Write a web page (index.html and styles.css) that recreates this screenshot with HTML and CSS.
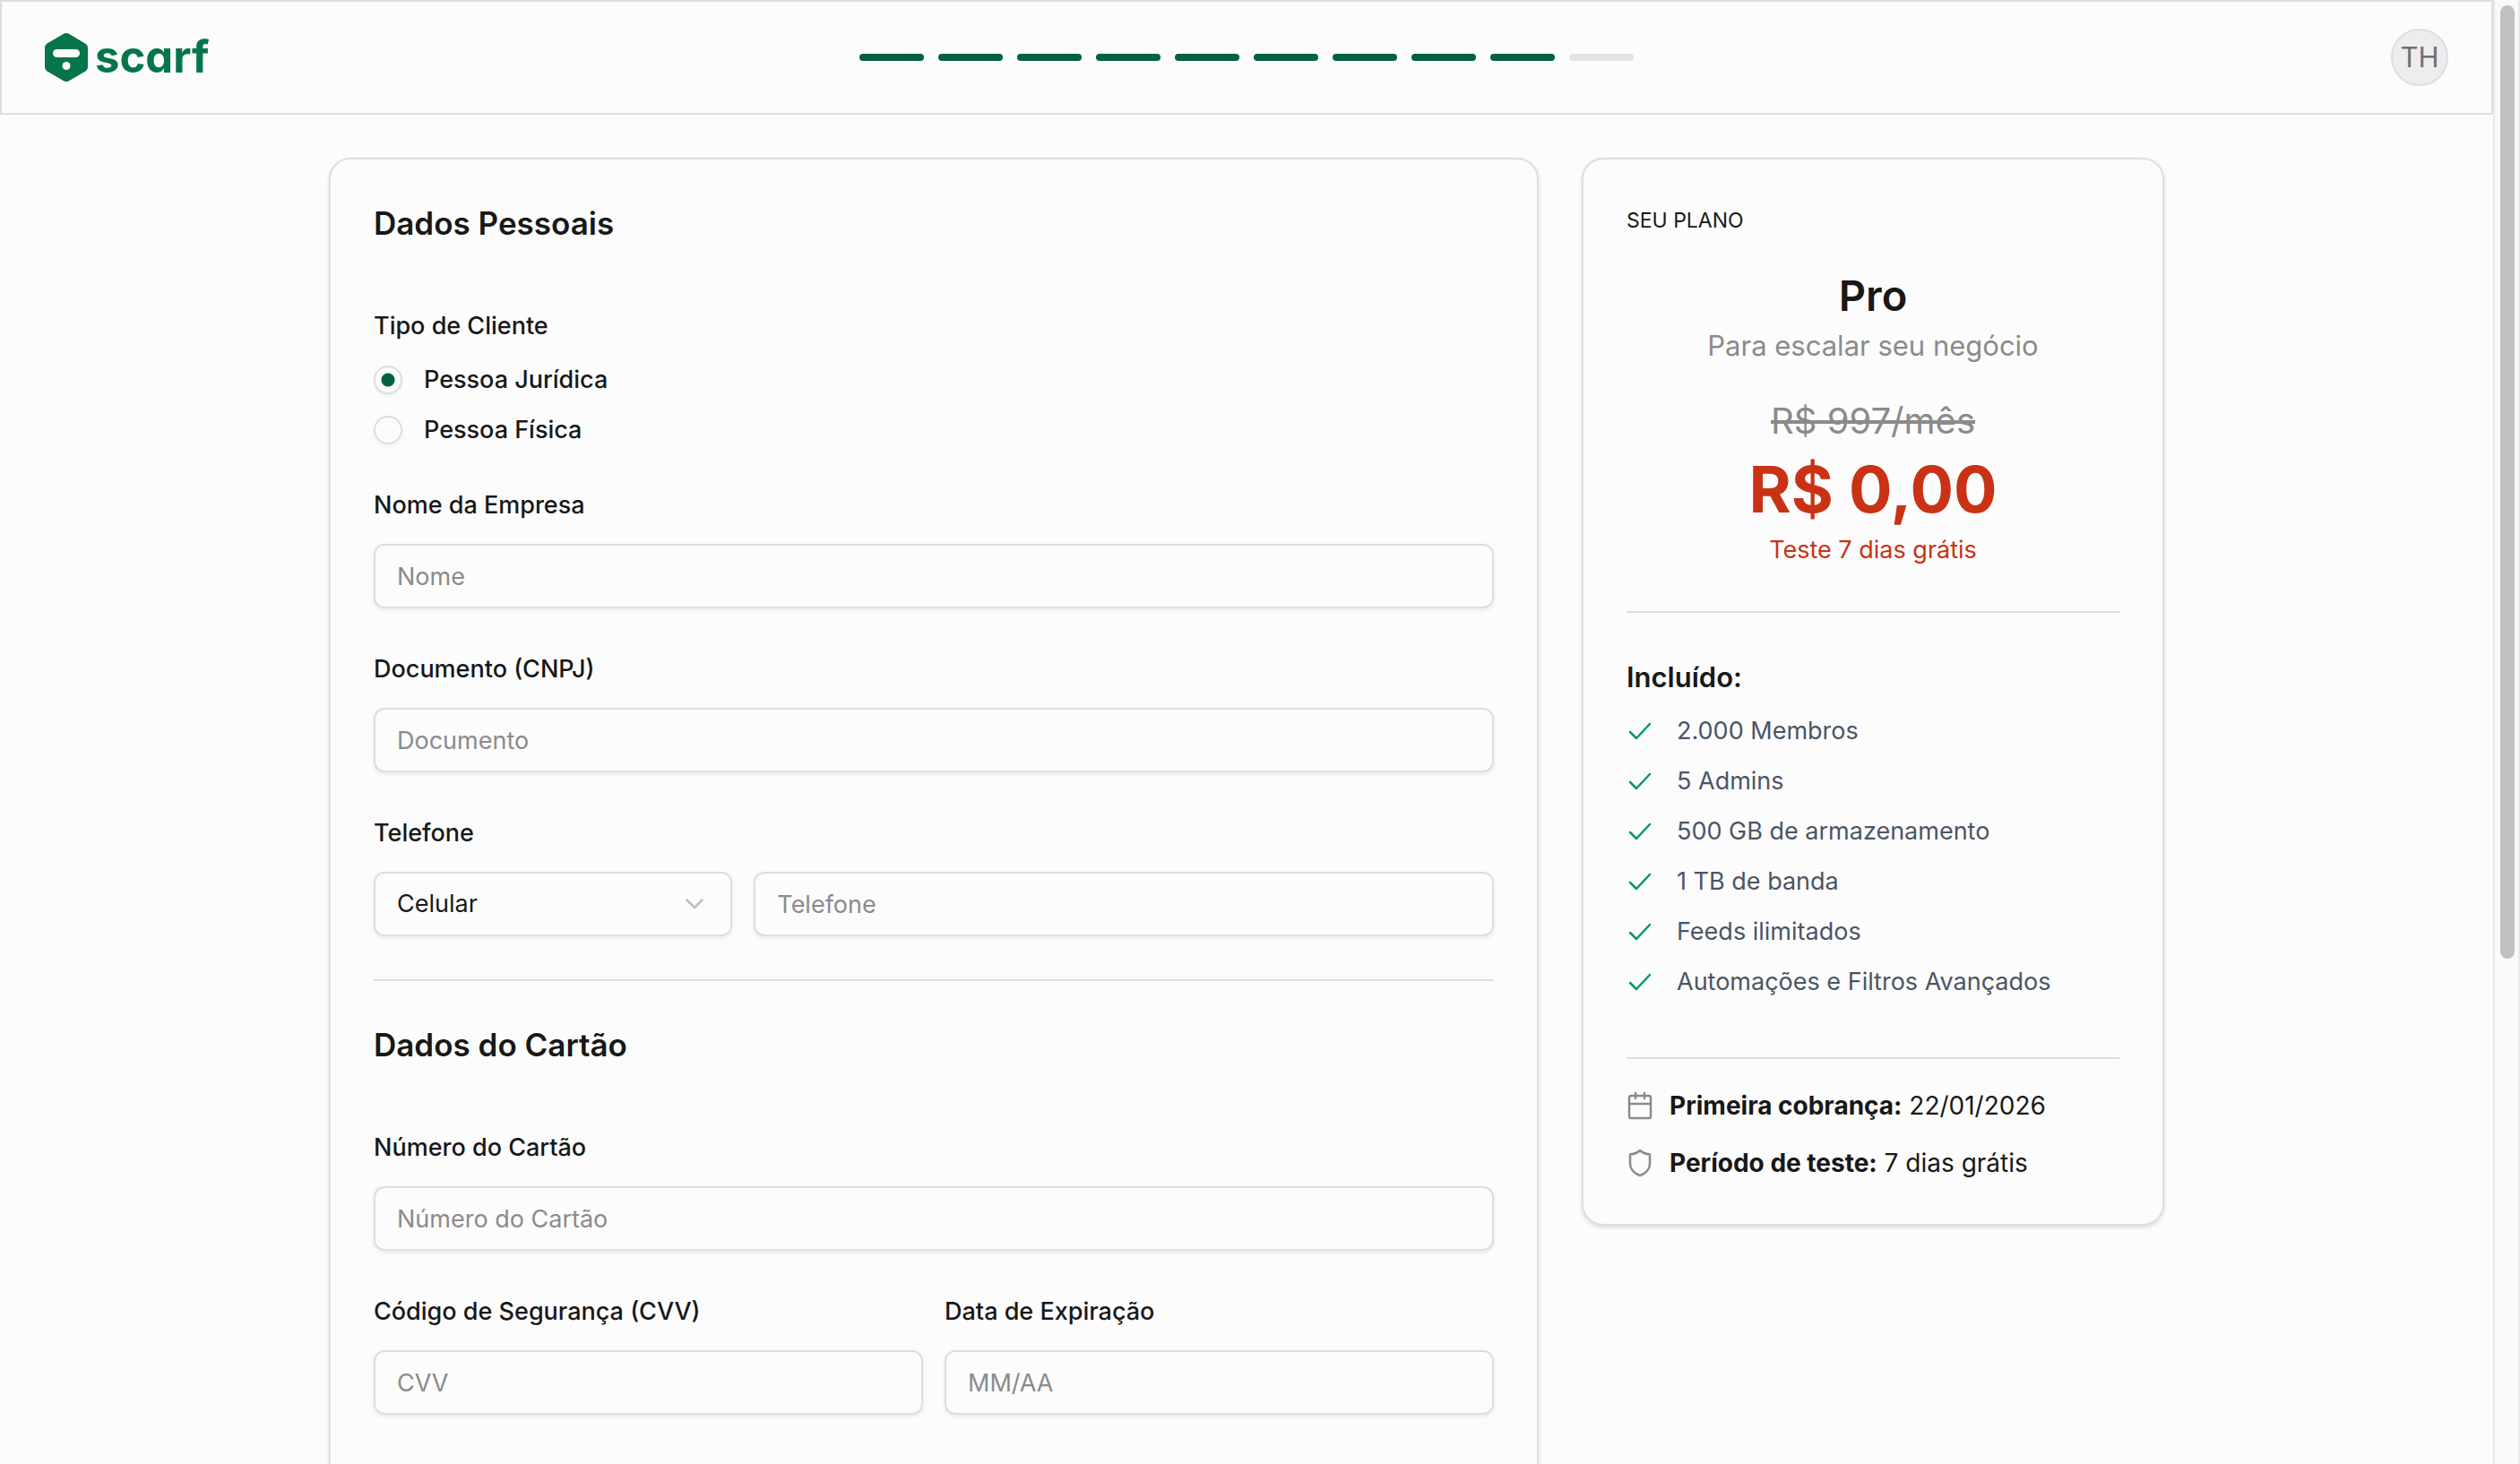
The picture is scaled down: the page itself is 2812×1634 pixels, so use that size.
FILE: index.html
```
<!DOCTYPE html>
<html lang="pt-BR">
<head>
	<meta charset="UTF-8">
	<meta name="viewport" content="width=device-width, initial-scale=1">
	<title>Scarf - Dados de pagamento</title>
	<link rel="stylesheet" href="styles.css">
</head>
<body>
	<div class="page">
		<header class="header">
			<a href="#" class="logo">
				<svg class="logo_icon" viewBox="0 0 48 54" aria-hidden="true">
					<path fill="#04764a" d="M21 .8a6 6 0 0 1 6 0l18 10.6a6 6 0 0 1 3 5.200v21a6 6 0 0 1-3 5.200L27 53.300a6 6 0 0 1-6 0L3 42.700a6 6 0 0 1-3-5.200v-21a6 6 0 0 1 3-5.200z"/>
					<rect x="9" y="18" width="30" height="9" rx="4.500" fill="#fcfcfc"/>
					<circle cx="24" cy="36.500" r="4.500" fill="#fcfcfc"/>
				</svg>
				<span class="logo_name">scarf</span>
			</a>
			<ol class="steps" aria-label="Progresso">
				<li class="step done"></li>
				<li class="step done"></li>
				<li class="step done"></li>
				<li class="step done"></li>
				<li class="step done"></li>
				<li class="step done"></li>
				<li class="step done"></li>
				<li class="step done"></li>
				<li class="step done"></li>
				<li class="step"></li>
			</ol>
			<button type="button" class="avatar">TH</button>
		</header>

		<main class="content">
			<form class="card form">
				<section class="section">
					<h2 class="title">Dados Pessoais</h2>

					<fieldset class="field choices">
						<legend class="label">Tipo de Cliente</legend>
						<label class="choice"><input type="radio" name="tipo" value="pj" class="radio" checked>Pessoa Jurídica</label>
						<label class="choice"><input type="radio" name="tipo" value="pf" class="radio">Pessoa Física</label>
					</fieldset>

					<div class="field">
						<label class="label" for="nome">Nome da Empresa</label>
						<input class="input" type="text" id="nome" placeholder="Nome">
					</div>

					<div class="field">
						<label class="label" for="documento">Documento (CNPJ)</label>
						<input class="input" type="text" id="documento" placeholder="Documento">
					</div>

					<div class="field">
						<label class="label" for="telefone">Telefone</label>
						<div class="phone">
							<div class="select_box">
								<select class="input select" aria-label="Tipo de telefone">
									<option>Celular</option>
									<option>Fixo</option>
								</select>
								<svg class="arrow" viewBox="0 0 20 12" aria-hidden="true"><path d="M1.500 1.500 10 10l8.500-8.500"/></svg>
							</div>
							<input class="input" type="tel" id="telefone" placeholder="Telefone">
						</div>
					</div>
				</section>

				<hr class="line">

				<section class="section">
					<h2 class="title">Dados do Cartão</h2>

					<div class="field">
						<label class="label" for="cartao">Número do Cartão</label>
						<input class="input" type="text" id="cartao" placeholder="Número do Cartão">
					</div>

					<div class="half">
						<div class="field">
							<label class="label" for="cvv">Código de Segurança (CVV)</label>
							<input class="input" type="text" id="cvv" placeholder="CVV">
						</div>
						<div class="field">
							<label class="label" for="validade">Data de Expiração</label>
							<input class="input" type="text" id="validade" placeholder="MM/AA">
						</div>
					</div>
				</section>
			</form>

			<aside class="card plan">
				<p class="plan_tag">SEU PLANO</p>
				<div class="price">
					<h3 class="plan_name">Pro</h3>
					<p class="plan_text">Para escalar seu negócio</p>
					<s class="old_price">R$ 997/mês</s>
					<strong class="new_price">R$ 0,00</strong>
					<p class="trial">Teste 7 dias grátis</p>
				</div>

				<hr class="line">

				<h4 class="included">Incluído:</h4>
				<ul class="features">
					<li><svg class="check" viewBox="0 0 28 28"><path d="m4 15 7 7L26 6"/></svg>2.000 Membros</li>
					<li><svg class="check" viewBox="0 0 28 28"><path d="m4 15 7 7L26 6"/></svg>5 Admins</li>
					<li><svg class="check" viewBox="0 0 28 28"><path d="m4 15 7 7L26 6"/></svg>500 GB de armazenamento</li>
					<li><svg class="check" viewBox="0 0 28 28"><path d="m4 15 7 7L26 6"/></svg>1 TB de banda</li>
					<li><svg class="check" viewBox="0 0 28 28"><path d="m4 15 7 7L26 6"/></svg>Feeds ilimitados</li>
					<li><svg class="check" viewBox="0 0 28 28"><path d="m4 15 7 7L26 6"/></svg>Automações e Filtros Avançados</li>
				</ul>

				<hr class="line">

				<ul class="info">
					<li>
						<svg class="info_icon" viewBox="0 0 32 32"><rect x="3" y="5" width="24" height="25" rx="2"/><path d="M3 14h24M10 2v6M20 2v6"/></svg>
						<span><b>Primeira cobrança:</b> 22/01/2026</span>
					</li>
					<li>
						<svg class="info_icon" viewBox="0 0 32 32"><path d="M15 2c3 3 6.500 4 11 4.500V17c0 7-4.500 10.500-11 13C8.500 27.500 4 24 4 17V6.500C8.500 6 12 5 15 2z"/></svg>
						<span><b>Período de teste:</b> 7 dias grátis</span>
					</li>
				</ul>
			</aside>
		</main>
	</div>

	<div class="scrollbar"><div class="thumb"></div></div>
</body>
</html>
```
FILE: styles.css
```
*{margin: 0; padding: 0; box-sizing: border-box;}
li{list-style: none;}
a{text-decoration: none;}
body{
	display: flex;
	height: 100vh;
	overflow: hidden;
	background: #fcfcfc;
	color: #181818;
	font: 27px/40px Inter, "Liberation Sans", sans-serif;
}
input, select, button{
	font: inherit;
	color: inherit;
}
.page{
	flex: 1;
	min-width: 0;
	overflow: hidden;
}

/* header */
.header{
	display: grid;
	grid-template-columns: 1fr auto 1fr;
	align-items: center;
	padding: 30px 48px;
	border: 2px solid #dedede;
}
.logo{
	display: flex;
	align-items: center;
	gap: 8px;
	color: #04764a;
}
.logo_icon{
	width: 48px;
	height: 54px;
}
.logo_name{
	font-size: 49px;
	font-weight: 700;
	line-height: 54px;
	font-feature-settings: "cv11";
}
.steps{
	display: flex;
	gap: 16px;
}
.step{
	width: 72px;
	height: 8px;
	border-radius: 4px;
	background: #e4e4e4;
}
.step.done{background: #026242;}
.avatar{
	justify-self: end;
	width: 64px;
	height: 64px;
	border: 2px solid #dedede;
	border-radius: 50%;
	background: #ededed;
	color: #707070;
	font-size: 31px;
}

/* content */
.content{
	display: grid;
	grid-template-columns: 27fr 13fr;
	gap: 48px;
	align-items: start;
	max-width: 2048px;
	margin: 48px auto;
}
.card{
	padding: 48px;
	border: 2px solid #dedede;
	border-radius: 24px;
	box-shadow: 0 2px 4px rgba(0,0,0,0.14);
}
.line{
	height: 2px;
	border: 0;
	background: #dedede;
}

/* form */
.form{
	display: flex;
	flex-direction: column;
	gap: 48px;
	min-height: 100vh;
}
.section{
	display: flex;
	flex-direction: column;
	gap: 48px;
}
.title{
	margin-bottom: 24px;
	font-size: 35px;
	font-weight: 600;
	line-height: 46px;
}
.field{
	display: flex;
	flex-direction: column;
	gap: 24px;
	border: 0;
}
.label{
	font-weight: 500;
	line-height: 39px;
}
.choices .label{margin-bottom: 25px;}
.choice{
	display: flex;
	align-items: center;
	gap: 24px;
	height: 32px;
	font-weight: 500;
}
.radio{
	appearance: none;
	width: 32px;
	height: 32px;
	border: 2px solid #dedede;
	border-radius: 50%;
	box-shadow: 0 2px 4px rgba(0,0,0,0.06);
}
.radio:checked{background: radial-gradient(circle, #026242 7px, transparent 8px);}
.input{
	width: 100%;
	height: 72px;
	padding: 0 24px;
	border: 2px solid #dedede;
	border-radius: 12px;
	background: #fcfcfc;
	box-shadow: 0 2px 5px rgba(0,0,0,0.08);
}
.input::placeholder{
	color: #8b8b8b;
	opacity: 1;
}
.phone{
	display: grid;
	grid-template-columns: 8fr 16.5fr;
	gap: 24px;
}
.select_box{position: relative;}
.select{appearance: none;}
.arrow{
	position: absolute;
	top: 30px;
	right: 32px;
	width: 20px;
	height: 12px;
	fill: none;
	stroke: #bdbdbd;
	stroke-width: 2.5;
	stroke-linecap: round;
	stroke-linejoin: round;
	pointer-events: none;
}
.half{
	display: grid;
	grid-template-columns: 1fr 1fr;
	gap: 24px;
}

/* plan */
.plan_tag{font-size: 23px;}
.price{
	display: flex;
	flex-direction: column;
	align-items: center;
	margin: 32px 0 48px;
}
.plan_name{
	font-size: 47px;
	font-weight: 600;
	line-height: 64px;
}
.plan_text{
	color: #8b8b8b;
	font-size: 31px;
	line-height: 48px;
}
.old_price{
	margin-top: 32px;
	color: #8b8b8b;
	font-size: 40px;
	line-height: 56px;
}
.new_price{
	color: #c93214;
	font-size: 72px;
	line-height: 96px;
}
.trial{color: #c93214;}
.included{
	margin-top: 48px;
	font-size: 31px;
	font-weight: 600;
	line-height: 48px;
}
.features{
	display: flex;
	flex-direction: column;
	gap: 16px;
	margin: 16px 0 64px;
	color: #4a5565;
}
.features li{
	display: flex;
	align-items: center;
	gap: 28px;
}
.check{
	width: 28px;
	height: 28px;
	fill: none;
	stroke: #009966;
	stroke-width: 2.5;
	stroke-linecap: round;
	stroke-linejoin: round;
}
.info{
	display: flex;
	flex-direction: column;
	gap: 24px;
	margin-top: 32px;
	font-size: 28px;
}
.info li{
	display: flex;
	align-items: center;
	gap: 16px;
}
.info_icon{
	width: 32px;
	height: 32px;
	fill: none;
	stroke: #8b8b8b;
	stroke-width: 2.5;
	stroke-linecap: round;
	stroke-linejoin: round;
}

/* scrollbar */
.scrollbar{
	width: 30px;
	padding: 6px 4px 6px 6px;
	border: solid #e8e8e8;
	border-width: 0 2px;
	background: #fafafa;
}
.thumb{
	width: 16px;
	height: 65.6%;
	border-radius: 8px;
	background: #c1c1c1;
}
```
